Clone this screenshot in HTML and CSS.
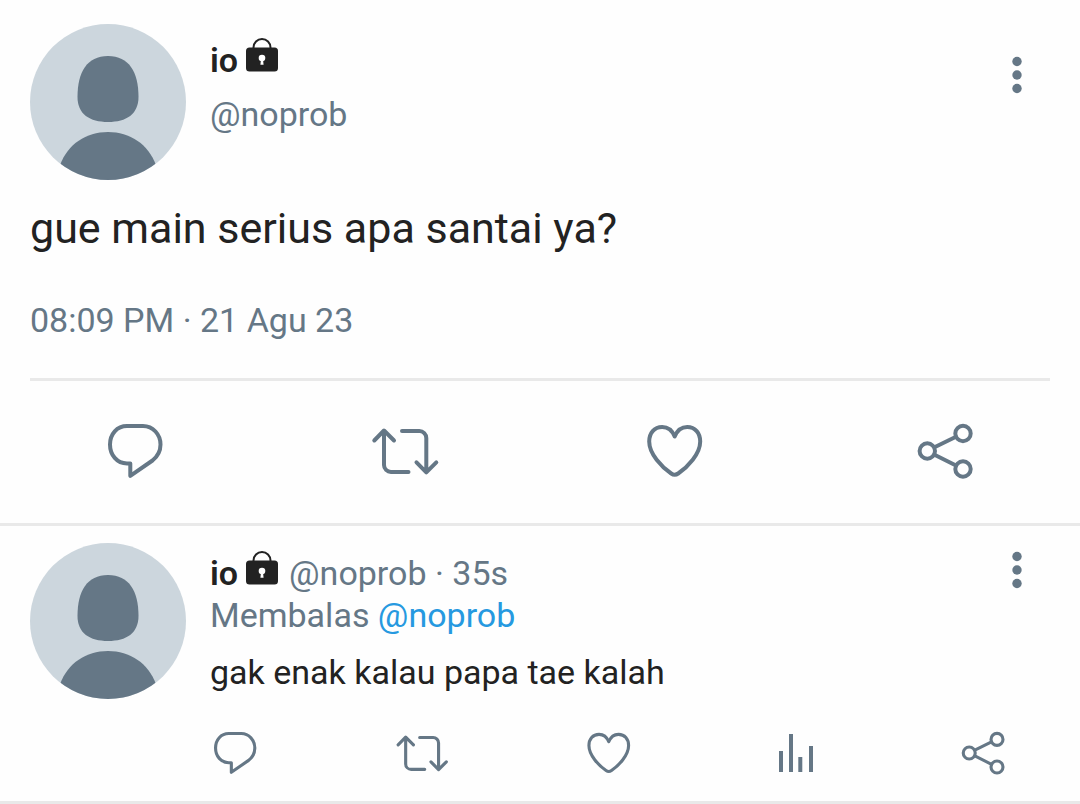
FILE: index.html
```html
<!DOCTYPE html>
<html lang="id">
<head>
    <meta charset="UTF-8">
    <meta name="viewport" content="width=device-width, initial-scale=1.0">
    <title>Tweet</title>
    <link rel="stylesheet" href="styles.css">
</head>
<body>
    <!-- Shared icons -->
    <svg class="sprite" aria-hidden="true">
        <symbol id="avatar" viewBox="0 0 156 156">
            <clipPath id="round"><circle cx="78" cy="78" r="78"/></clipPath>
            <circle cx="78" cy="78" r="78" fill="#ccd6dd"/>
            <path fill="#657786" d="M78 32c21 0 30.500 16 30.500 41 0 17-12 25-30.500 25s-30.500-8-30.500-25c0-25 9.500-41 30.500-41z"/>
            <path fill="#657786" clip-path="url(#round)" d="M30 141c8-21 26-33 48-33s40 12 48 33v15H30z"/>
        </symbol>
        <symbol id="lock" viewBox="0 0 32 34">
            <path fill="none" stroke="#222" stroke-width="2" d="M7.500 11v-1.500a8.500 8.500 0 0 1 17 0v1.500"/>
            <rect y="9.500" width="32" height="24" rx="3.500" fill="#222"/>
            <circle cx="16" cy="20" r="3.300" fill="#fff"/>
            <path fill="#fff" d="M15 21.500h2l.6 5.200h-3.200z"/>
        </symbol>
        <symbol id="dots" viewBox="0 0 36 42">
            <circle cx="18" cy="7.500" r="4.700"/>
            <circle cx="18" cy="21" r="4.700"/>
            <circle cx="18" cy="34.500" r="4.700"/>
        </symbol>
        <symbol id="reply" viewBox="0 0 72 72">
            <path class="line" d="M28 11h16c10 0 17.500 8.500 17.500 18.500 0 6.500-3 12-8 16L31.300 60.800V48.500H28c-10 0-17-8.500-17-19S18 11 28 11z"/>
        </symbol>
        <symbol id="retweet" viewBox="0 0 72 72">
            <path class="line" d="M5.300 25.500L15 15.500l10 10M15 16v34a7 7 0 0 0 7 7h17.500M33 16h17.300a7 7 0 0 1 7 7v34M47.500 47.300l9.800 10 10-10"/>
        </symbol>
        <symbol id="heart" viewBox="0 0 72 72">
            <path class="line" d="M35.700 21.500c-2.500-6-7-9.500-12.500-9.500-8 0-13 6-13 14.500 0 12.500 12.500 25.500 22 32q3.500 2.500 7 0c9.500-6.500 22-19.500 22-32C61.200 18 56.200 12 48.200 12c-5.500 0-10 3.500-12.500 9.500z"/>
        </symbol>
        <symbol id="share" viewBox="0 0 72 72">
            <path class="line" d="M25.500 32.300L47 21.800M25.500 39.700L47 50.500"/>
            <circle class="line" cx="18.300" cy="36" r="7.700"/>
            <circle class="line" cx="54" cy="18.500" r="7.700"/>
            <circle class="line" cx="54" cy="54" r="7.700"/>
        </symbol>
        <symbol id="stats" viewBox="0 0 56 56">
            <path d="M11 26h4v21h-4zM21 9h4v38h-4zM30.300 32h4v15h-4zM41 21h4v26h-4z"/>
        </symbol>
    </svg>

    <article class="tweet">
        <div class="tweet-main">
            <header class="tweet-header">
                <svg class="avatar"><use href="#avatar"/></svg>
                <div class="user">
                    <div class="user-line"><b class="name">io</b><svg class="lock"><use href="#lock"/></svg></div>
                    <div class="user-line">@noprob</div>
                </div>
                <button class="more" aria-label="Menu"><svg><use href="#dots"/></svg></button>
            </header>
            <p class="tweet-text">gue main serius apa santai ya?</p>
            <p class="date">08:09 PM · 21 Agu 23</p>
        </div>
        <div class="actions">
            <button aria-label="Balas"><svg><use href="#reply"/></svg></button>
            <button aria-label="Retweet"><svg><use href="#retweet"/></svg></button>
            <button aria-label="Suka"><svg><use href="#heart"/></svg></button>
            <button aria-label="Bagikan"><svg><use href="#share"/></svg></button>
        </div>
    </article>

    <article class="reply">
        <svg class="avatar"><use href="#avatar"/></svg>
        <div class="reply-body">
            <div class="reply-top">
                <div class="reply-content">
                    <div class="reply-line"><b class="name">io</b><svg class="lock"><use href="#lock"/></svg><span class="meta">@noprob · 35s</span></div>
                    <div class="reply-line">Membalas&nbsp;<a href="#">@noprob</a></div>
                    <p class="reply-text">gak enak kalau papa tae kalah</p>
                </div>
                <button class="more" aria-label="Menu"><svg><use href="#dots"/></svg></button>
            </div>
            <div class="reply-actions">
                <button aria-label="Balas"><svg><use href="#reply"/></svg></button>
                <button aria-label="Retweet"><svg><use href="#retweet"/></svg></button>
                <button aria-label="Suka"><svg><use href="#heart"/></svg></button>
                <button aria-label="Statistik"><svg><use href="#stats"/></svg></button>
                <button aria-label="Bagikan"><svg><use href="#share"/></svg></button>
            </div>
        </div>
    </article>
</body>
</html>
```

FILE: styles.css
```css
:root {
    --text: #222;
    --muted: #657786;
    --link: #2699e0;
    --border: #e9e9e9;
}
* {
    box-sizing: border-box;
}
body {
    margin: 0;
    background: #fefefe;
    color: var(--muted);
    font-family: Roboto, Arial, sans-serif;
    font-size: 34px;
}
p {
    margin: 0;
}
a {
    color: var(--link);
    text-decoration: none;
}
button {
    display: block;
    padding: 0;
    border: 0;
    background: none;
    color: var(--muted);
    cursor: pointer;
}
svg {
    display: block;
    fill: currentColor;
}
.sprite {
    position: absolute;
    width: 0;
    height: 0;
}
.line {
    fill: none;
    stroke: currentColor;
    stroke-width: 4;
    stroke-linecap: round;
    stroke-linejoin: round;
}
.avatar {
    flex: none;
    width: 156px;
    height: 156px;
}
.name {
    color: var(--text);
    font-weight: 600;
}
.lock {
    width: 32px;
    height: 34px;
    margin: 0 11px 10px 8px;
}
.more {
    flex: none;
    margin-right: 15px;
}
.more svg {
    width: 36px;
    height: 42px;
}

/* Main tweet */
.tweet {
    border-bottom: 3px solid var(--border);
}
.tweet-main {
    margin: 0 30px;
    padding: 24px 0 38px;
    border-bottom: 3px solid var(--border);
}
.tweet-header {
    display: flex;
    align-items: flex-start;
    gap: 24px;
}
.user {
    flex: 1;
    margin-top: 9px;
}
.user-line {
    display: flex;
    align-items: center;
    height: 54px;
}
.tweet-header .more {
    margin-top: 30px;
}
.tweet-text {
    margin-top: 22px;
    color: var(--text);
    font-size: 43px;
    line-height: 52px;
}
.date {
    margin-top: 46px;
    line-height: 40px;
}
.actions {
    display: grid;
    grid-template-columns: repeat(4, 1fr);
    justify-items: center;
    padding: 34px 0 36px;
}
.actions svg {
    width: 72px;
    height: 72px;
}

/* Reply */
.reply {
    display: flex;
    align-items: flex-start;
    gap: 24px;
    padding: 17px 30px 20px;
    border-bottom: 3px solid var(--border);
}
.reply-body {
    flex: 1;
}
.reply-top {
    display: flex;
    align-items: flex-start;
}
.reply-content {
    flex: 1;
    margin-top: 9px;
}
.reply-line {
    display: flex;
    align-items: center;
    height: 42px;
}
.reply-top .more {
    margin-top: 6px;
}
.reply-text {
    margin-top: 15px;
    color: var(--text);
    line-height: 42px;
}
.reply-actions {
    display: flex;
    justify-content: space-between;
    margin: 32px 39px 0 -3px;
}
.reply-actions svg {
    width: 56px;
    height: 56px;
}
```
